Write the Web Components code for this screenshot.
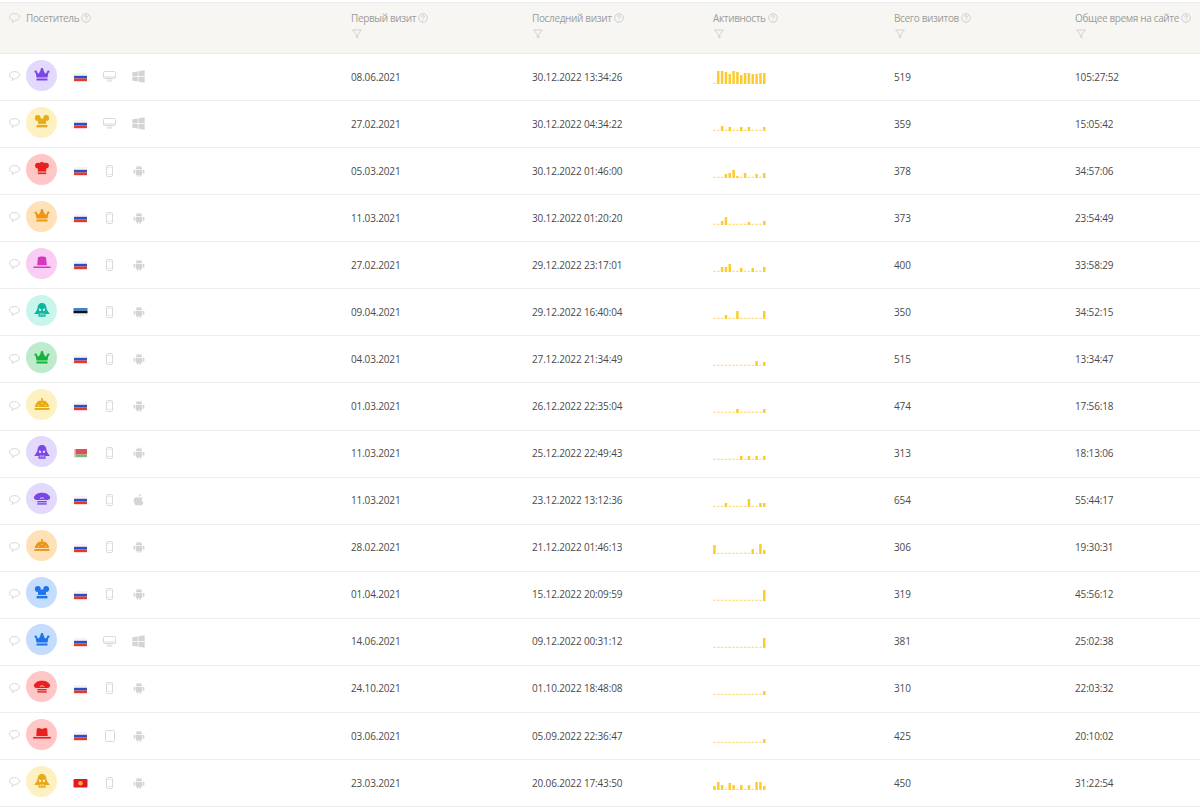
<!DOCTYPE html>
<html lang="ru">
<head>
<meta charset="utf-8">
<title>Посетители</title>
<style>
  html, body { margin: 0; background: #fff; }
  body { font-family: "Open Sans", "Liberation Sans", sans-serif; font-size: 10px; letter-spacing: -.15px; color: #4a4a4a; overflow: hidden; }
</style>
</head>
<body>
<visits-table>
  <table-head>
    <head-cell first>Посетитель</head-cell>
    <head-cell filter>Первый визит</head-cell>
    <head-cell filter>Последний визит</head-cell>
    <head-cell filter>Активность</head-cell>
    <head-cell filter>Всего визитов</head-cell>
    <head-cell filter>Общее время на сайте</head-cell>
  </table-head>
  <visit-row hat="crown" color="purple" flag="ru" device="desktop" os="windows"><span>08.06.2021</span><span>30.12.2022 13:34:26</span><activity-bars data="1,13,13,12,10,13,12,9,11,11,10,10,11,11"></activity-bars><span>519</span><span>105:27:52</span></visit-row>
  <visit-row hat="mouse" color="yellow" flag="ru" device="desktop" os="windows"><span>27.02.2021</span><span>30.12.2022 04:34:22</span><activity-bars data="1,1,5,1,4,1,1,4,1,4,1,1,1,4"></activity-bars><span>359</span><span>15:05:42</span></visit-row>
  <visit-row hat="chef" color="red" flag="ru" device="phone" os="android"><span>05.03.2021</span><span>30.12.2022 01:46:00</span><activity-bars data="1,1,1,4,5,8,2,1,5,1,1,4,1,5"></activity-bars><span>378</span><span>34:57:06</span></visit-row>
  <visit-row hat="crown" color="orange" flag="ru" device="phone" os="android"><span>11.03.2021</span><span>30.12.2022 01:20:20</span><activity-bars data="1,1,4,8,1,1,1,1,1,3,1,1,1,4"></activity-bars><span>373</span><span>23:54:49</span></visit-row>
  <visit-row hat="fedora" color="pink" flag="ru" device="phone" os="android"><span>27.02.2021</span><span>29.12.2022 23:17:01</span><activity-bars data="1,1,5,5,8,1,1,4,1,1,4,1,1,5"></activity-bars><span>400</span><span>33:58:29</span></visit-row>
  <visit-row hat="vader" color="teal" flag="ee" device="phone" os="android"><span>09.04.2021</span><span>29.12.2022 16:40:04</span><activity-bars data="1,1,1,4,1,1,8,1,1,1,1,1,1,8"></activity-bars><span>350</span><span>34:52:15</span></visit-row>
  <visit-row hat="crown" color="green" flag="ru" device="phone" os="android"><span>04.03.2021</span><span>27.12.2022 21:34:49</span><activity-bars data="1,1,1,1,1,1,1,1,1,1,1,5,1,4"></activity-bars><span>515</span><span>13:34:47</span></visit-row>
  <visit-row hat="cloche" color="yellow" flag="ru" device="phone" os="android"><span>01.03.2021</span><span>26.12.2022 22:35:04</span><activity-bars data="1,1,1,1,1,1,4,1,1,1,1,1,1,4"></activity-bars><span>474</span><span>17:56:18</span></visit-row>
  <visit-row hat="vader" color="purple" flag="by" device="phone" os="android"><span>11.03.2021</span><span>25.12.2022 22:49:43</span><activity-bars data="1,1,1,1,1,1,1,4,1,4,1,4,1,4"></activity-bars><span>313</span><span>18:13:06</span></visit-row>
  <visit-row hat="cap" color="purple" flag="ru" device="phone" os="apple"><span>11.03.2021</span><span>23.12.2022 13:12:36</span><activity-bars data="1,1,1,4,1,1,1,1,1,8,1,1,4,4"></activity-bars><span>654</span><span>55:44:17</span></visit-row>
  <visit-row hat="cloche" color="orange" flag="ru" device="phone" os="android"><span>28.02.2021</span><span>21.12.2022 01:46:13</span><activity-bars data="9,1,1,1,1,1,1,1,1,1,5,1,10,4"></activity-bars><span>306</span><span>19:30:31</span></visit-row>
  <visit-row hat="mouse" color="blue" flag="ru" device="phone" os="android"><span>01.04.2021</span><span>15.12.2022 20:09:59</span><activity-bars data="1,1,1,1,1,1,1,1,1,1,1,1,1,11"></activity-bars><span>319</span><span>45:56:12</span></visit-row>
  <visit-row hat="crown" color="blue" flag="ru" device="desktop" os="windows"><span>14.06.2021</span><span>09.12.2022 00:31:12</span><activity-bars data="1,1,1,1,1,1,1,1,1,1,1,1,1,10"></activity-bars><span>381</span><span>25:02:38</span></visit-row>
  <visit-row hat="cap" color="red" flag="ru" device="phone" os="android"><span>24.10.2021</span><span>01.10.2022 18:48:08</span><activity-bars data="1,1,1,1,1,1,1,1,1,1,1,1,1,4"></activity-bars><span>310</span><span>22:03:32</span></visit-row>
  <visit-row hat="hat" color="red" flag="ru" device="tablet" os="android"><span>03.06.2021</span><span>05.09.2022 22:36:47</span><activity-bars data="1,1,1,1,1,1,1,1,1,1,1,1,1,4"></activity-bars><span>425</span><span>20:10:02</span></visit-row>
  <visit-row hat="vader" color="yellow" flag="kg" device="phone" os="android"><span>23.03.2021</span><span>20.06.2022 17:43:50</span><activity-bars data="4,8,5,1,7,5,1,5,1,5,1,8,8,4"></activity-bars><span>450</span><span>31:22:54</span></visit-row>
</visits-table>

<script>
const GREY = '#d6d6d6';
const commentSvg = `<svg width="11" height="10" viewBox="0 0 11 10" fill="none"><path d="M5.5.6C2.7.6.5 2 .5 4s2 3.3 3.4 3.4c0 .6-.4 1.300-.9 1.900 1.300-.2 2.400-1 3.100-1.900C8.600 7.300 10.500 6 10.500 4S8.300.6 5.500.6z" stroke="#d0d0d0" stroke-width=".9"/></svg>`;

class VisitsTable extends HTMLElement {
  connectedCallback() {
    this.attachShadow({ mode: 'open' });
    this.shadowRoot.innerHTML = `
      <style>
        :host { display: block; padding-top: 3px; }
      </style>
      <slot></slot>`;
  }
}

class TableHead extends HTMLElement {
  connectedCallback() {
    this.attachShadow({ mode: 'open' });
    this.shadowRoot.innerHTML = `
      <style>
        :host {
          display: grid;
          grid-template-columns: 351px repeat(4, 181px) 1fr;
          height: 50px;
          background: #f7f6f2;
          border-top: 1px solid #eeeeee;
          border-bottom: 1px solid #ebebeb;
          margin-top: -1px;
          color: #9c9c9c;
          letter-spacing: -.35px;
        }
      </style>
      <slot></slot>`;
  }
}

class HeadCell extends HTMLElement {
  connectedCallback() {
    const first = this.hasAttribute('first');
    const filter = this.hasAttribute('filter');
    this.attachShadow({ mode: 'open' });
    this.shadowRoot.innerHTML = `
      <style>
        :host { display: flex; flex-direction: column; padding-top: 8px; gap: 4px; }
        .title { display: flex; align-items: center; height: 14px; white-space: nowrap; }
        .note { margin: 0 6px 0 9px; display: flex; }
        .help { margin-left: 2px; flex: none; }
        .filter { margin-left: 1px; display: block; }
      </style>
      <div class="title">
        ${first ? `<span class="note">${commentSvg}</span>` : ''}
        <slot></slot>
        <svg class="help" width="10" height="10" viewBox="0 0 10 10" fill="none">
          <circle cx="5" cy="5" r="4.300" stroke="#c4c4c4" stroke-width=".8"/>
          <path d="M3.600 4c0-.9.6-1.400 1.400-1.400s1.400.5 1.400 1.200c0 1-1.400 1-1.400 2.100M5 6.900v.8" stroke="#c4c4c4" stroke-width=".8"/>
        </svg>
      </div>
      ${filter ? `<svg class="filter" width="10" height="10" viewBox="0 0 10 10" fill="none">
        <path d="M.6 1h8.800L5.800 5.400V9L4.200 8V5.400z" stroke="#c9c9c9" stroke-width=".8"/>
      </svg>` : ''}`;
  }
}

const HAT_COLORS = {
  purple: ['#e3d9fc', '#7b46e6'],
  yellow: ['#fdf1c2', '#e8aa18'],
  red: ['#ffc6c6', '#e8201f'],
  orange: ['#ffe1b8', '#ec9516'],
  pink: ['#f9cdf5', '#d735bf'],
  teal: ['#c9f6ec', '#0fb59d'],
  green: ['#bdebcb', '#14b340'],
  blue: ['#c4dcfd', '#1f73e6'],
};

const HATS = {
  crown: `<circle cx="2.700" cy="3.600" r="1.200"/><circle cx="9" cy="1.400" r="1.300"/><circle cx="15.300" cy="3.600" r="1.200"/>
    <path d="M2.400 3.600h.8l2.500 2.200L8 1.500h2l2.300 4.300 2.500-2.200h.8l-1.100 6H3.500z"/><rect x="3.500" y="10.500" width="11" height="2"/>`,
  mouse: `<circle cx="4.800" cy="3" r="2.900"/><circle cx="13.200" cy="3" r="2.900"/>
    <path d="M5 5.500h8v3.400H5z"/><path d="M6.500 3.500h5v3h-5z"/><rect x="3.600" y="9.900" width="10.800" height="2.500"/>`,
  chef: `<circle cx="5" cy="3.600" r="2.900"/><circle cx="9" cy="3" r="3"/><circle cx="13" cy="3.600" r="2.900"/>
    <rect x="4.800" y="4" width="8.400" height="5.600"/><rect x="4.800" y="10.500" width="8.400" height="1.600"/>`,
  fedora: `<path d="M4.200 9.300 5 1.300C7 .2 11 .2 13 1.300l.8 8z"/><rect x=".5" y="10.500" width="17" height="1.500"/>`,
  hat: `<path d="M3.300 8.900 3.800 1.500 6 1.100 9 1.900l3-.8 2.200.4.5 7.400z"/><rect x=".2" y="9.900" width="17.600" height="1.700"/>`,
  vader: `<path d="M9 .1C5.600 .1 5 2.500 4.500 5 4 7.500 2.500 9 1.200 11h4.300v2.800h7V11h4.300C15.500 9 14 7.500 13.500 5 13 2.500 12.400 .1 9 .1z"/>
    <g class="cut"><path d="M5.700 5.300 8.300 6.300 7.900 8H6.300zM12.300 5.300 9.700 6.300 10.100 8h1.600z"/><rect x="6.800" y="10.300" width=".8" height="2.200"/><rect x="8.600" y="10.300" width=".8" height="2.200"/><rect x="10.400" y="10.300" width=".8" height="2.200"/></g>`,
  cloche: `<circle cx="9" cy="1.100" r="1.100"/><path d="M2 9C2.200 5 5.200 2.200 9 2.200S15.800 5 16 9z"/><rect x="1.500" y="10" width="15" height="1.900"/>
    <g class="cut"><circle cx="5.500" cy="7.300" r=".6"/><circle cx="9" cy="5.300" r=".6"/><circle cx="12.500" cy="7.300" r=".6"/></g>`,
  cap: `<path d="M1 5C3-.8 15-.8 17 5c.4 1.600-.8 3-2.500 3H3.500C1.800 8 .6 6.600 1 5z"/>
    <rect x="4.300" y="9" width="9.400" height="1.400"/><rect x="4.300" y="11.200" width="9.400" height="1.400"/>
    <path class="line" d="M6.800 6.600Q9 4.800 11.200 6.600"/>`,
};

class VisitorAvatar extends HTMLElement {
  connectedCallback() {
    const [bg, fg] = HAT_COLORS[this.getAttribute('color')];
    this.attachShadow({ mode: 'open' });
    this.shadowRoot.innerHTML = `
      <style>
        :host {
          display: flex; align-items: center; justify-content: center;
          width: 31px; height: 31px; border-radius: 50%;
          background: ${bg};
        }
        svg { fill: ${fg}; display: block; }
        .cut, .cut * { fill: ${bg}; }
        .line { fill: none; stroke: ${bg}; stroke-width: .9; }
      </style>
      <svg width="18" height="14" viewBox="0 0 18 14">${HATS[this.getAttribute('hat')]}</svg>`;
  }
}

const FLAGS = {
  ru: `<rect y="0" width="13" height="2.800" fill="#f4f4f4"/><rect y="2.800" width="13" height="2.700" fill="#2a4fc4"/><rect y="5.500" width="13" height="2.700" fill="#e0392f"/>`,
  ee: `<rect x="-.5" y="0" width="14" height="2.800" fill="#3f84c9"/><rect x="-.5" y="2.800" width="14" height="2.700" fill="#111"/><rect x="-.5" y="5.500" width="14" height="2.700" fill="#f2f2f2"/>`,
  by: `<rect width="13" height="5.400" fill="#df4f57"/><rect y="5.400" width="13" height="2.800" fill="#79b77b"/><rect width="1.600" height="8.200" fill="#f3c2c2"/>`,
  kg: `<rect x="-.5" width="14" height="8.600" rx="1" fill="#e3162a"/><circle cx="6.500" cy="4.200" r="2.300" fill="#f0b323"/>`,
};

class CountryFlag extends HTMLElement {
  connectedCallback() {
    this.attachShadow({ mode: 'open' });
    this.shadowRoot.innerHTML = `
      <style>
        :host { display: block; width: 13px; height: 9px; }
        svg { display: block; overflow: visible; }
      </style>
      <svg width="13" height="9" viewBox="0 0 13 9">${FLAGS[this.getAttribute('code')]}</svg>`;
  }
}

const DEVICES = {
  desktop: `<svg width="13" height="11" viewBox="0 0 13 11" fill="none" stroke="${GREY}" stroke-width=".9"><rect x=".5" y=".5" width="12" height="7" rx="1"/><path d="M.5 6h12M5.300 8v1.800M7.700 8v1.800M3.800 10h5.400"/></svg>`,
  phone: `<svg width="7" height="12" viewBox="0 0 7 12" fill="none" stroke="${GREY}" stroke-width=".9"><rect x=".5" y=".5" width="6" height="11" rx="1.200"/><path d="M.5 2.200h6M.5 9.400h6" stroke-width=".6"/></svg>`,
  tablet: `<svg width="10" height="12" viewBox="0 0 10 12" fill="none" stroke="${GREY}" stroke-width=".9"><rect x=".5" y=".5" width="9" height="11" rx="1.300"/><path d="M4.500 2h1M4.500 10h1" stroke-width=".7"/></svg>`,
};

const SYSTEMS = {
  windows: `<svg width="13" height="13" viewBox="0 0 13 13" fill="#d4d4d4"><path d="M.3 2.200 5.800 1.400V6H.3zM6.500 1.300 12.700.3V6H6.500zM.3 6.800h5.500v4.800L.3 10.800zM6.500 6.800h6.200v5.900l-6.200-1z"/></svg>`,
  android: `<svg width="12" height="12" viewBox="0 0 12 12" fill="#d4d4d4"><path d="M2.800 4.300C2.900 2.500 4.300 1.300 6 1.300s3.100 1.200 3.200 3zM2.800 4.900h6.400v4.300c0 .5-.3.8-.8.8H3.600c-.5 0-.8-.3-.8-.8z"/><rect x=".6" y="4.800" width="1.600" height="4" rx=".8"/><rect x="9.800" y="4.800" width="1.600" height="4" rx=".8"/><rect x="3.900" y="9" width="1.500" height="2.800" rx=".7"/><rect x="6.600" y="9" width="1.500" height="2.800" rx=".7"/><path d="M4 2 3.200.4M8 2 8.800.4" stroke="#d4d4d4" stroke-width=".5"/></svg>`,
  apple: `<svg width="11" height="12" viewBox="0 0 11 12" fill="#d4d4d4"><path d="M8.200 3.200c-1 0-1.700.6-2.400.6S4.500 3.200 3.500 3.200C1.900 3.200.6 4.500.6 6.500c0 2.200 1.600 5.100 3 5.100.8 0 1.200-.5 2.100-.5s1.200.5 2.100.5c1.200 0 2.300-2 2.700-3.300-1-.4-1.700-1.300-1.700-2.400 0-1 .6-1.800 1.400-2.200-.5-.3-1.200-.5-2-.5zM7.800 0C6.600.1 5.500 1.200 5.600 2.700 6.900 2.600 7.900 1.400 7.800 0z"/></svg>`,
};

class VisitRow extends HTMLElement {
  connectedCallback() {
    const a = (n) => this.getAttribute(n);
    this.attachShadow({ mode: 'open' });
    this.shadowRoot.innerHTML = `
      <style>
        :host {
          display: grid;
          grid-template-columns: 351px repeat(4, 181px) 1fr;
          align-items: center;
          box-sizing: border-box;
          height: 47.070px;
          padding-bottom: .8px;
          border-bottom: 1px solid #eeeeee;
          white-space: nowrap;
        }
        .visitor { display: flex; align-items: center; padding-left: 9px; }
        .note { display: flex; width: 11px; margin-right: 6px; margin-top: -1px; }
        visitor-avatar { margin-top: -3px; margin-right: 17px; flex: none; }
        country-flag { margin-top: 1.500px; margin-right: 16px; flex: none; }
        .icon { display: flex; justify-content: center; width: 13px; flex: none; }
        .device { margin-right: 16px; }
      </style>
      <div class="visitor">
        <span class="note">${commentSvg}</span>
        <visitor-avatar hat="${a('hat')}" color="${a('color')}"></visitor-avatar>
        <country-flag code="${a('flag')}"></country-flag>
        <span class="icon device">${DEVICES[a('device')]}</span>
        <span class="icon">${SYSTEMS[a('os')]}</span>
      </div>
      <slot></slot>`;
  }
}

class ActivityBars extends HTMLElement {
  connectedCallback() {
    const bars = this.getAttribute('data').split(',').map(Number);
    const step = 3.83;
    this.attachShadow({ mode: 'open' });
    this.shadowRoot.innerHTML = `
      <style>
        :host { display: block; width: 53px; height: 14px; }
        svg { display: block; fill: #fdcb2f; }
        .low { fill-opacity: .6; }
      </style>
      <svg width="53" height="14" viewBox="0 0 53 14">
        ${bars.map((h, i) => {
          const bh = h === 1 ? 1.3 : h;
          return `<rect class="${h === 1 ? 'low' : ''}" x="${(i * step + .2).toFixed(2)}" y="${14 - bh}" width="2.500" height="${bh}"/>`;
        }).join('')}
      </svg>`;
  }
}

customElements.define('visits-table', VisitsTable);
customElements.define('table-head', TableHead);
customElements.define('head-cell', HeadCell);
customElements.define('visitor-avatar', VisitorAvatar);
customElements.define('country-flag', CountryFlag);
customElements.define('visit-row', VisitRow);
customElements.define('activity-bars', ActivityBars);
</script>
</body>
</html>
